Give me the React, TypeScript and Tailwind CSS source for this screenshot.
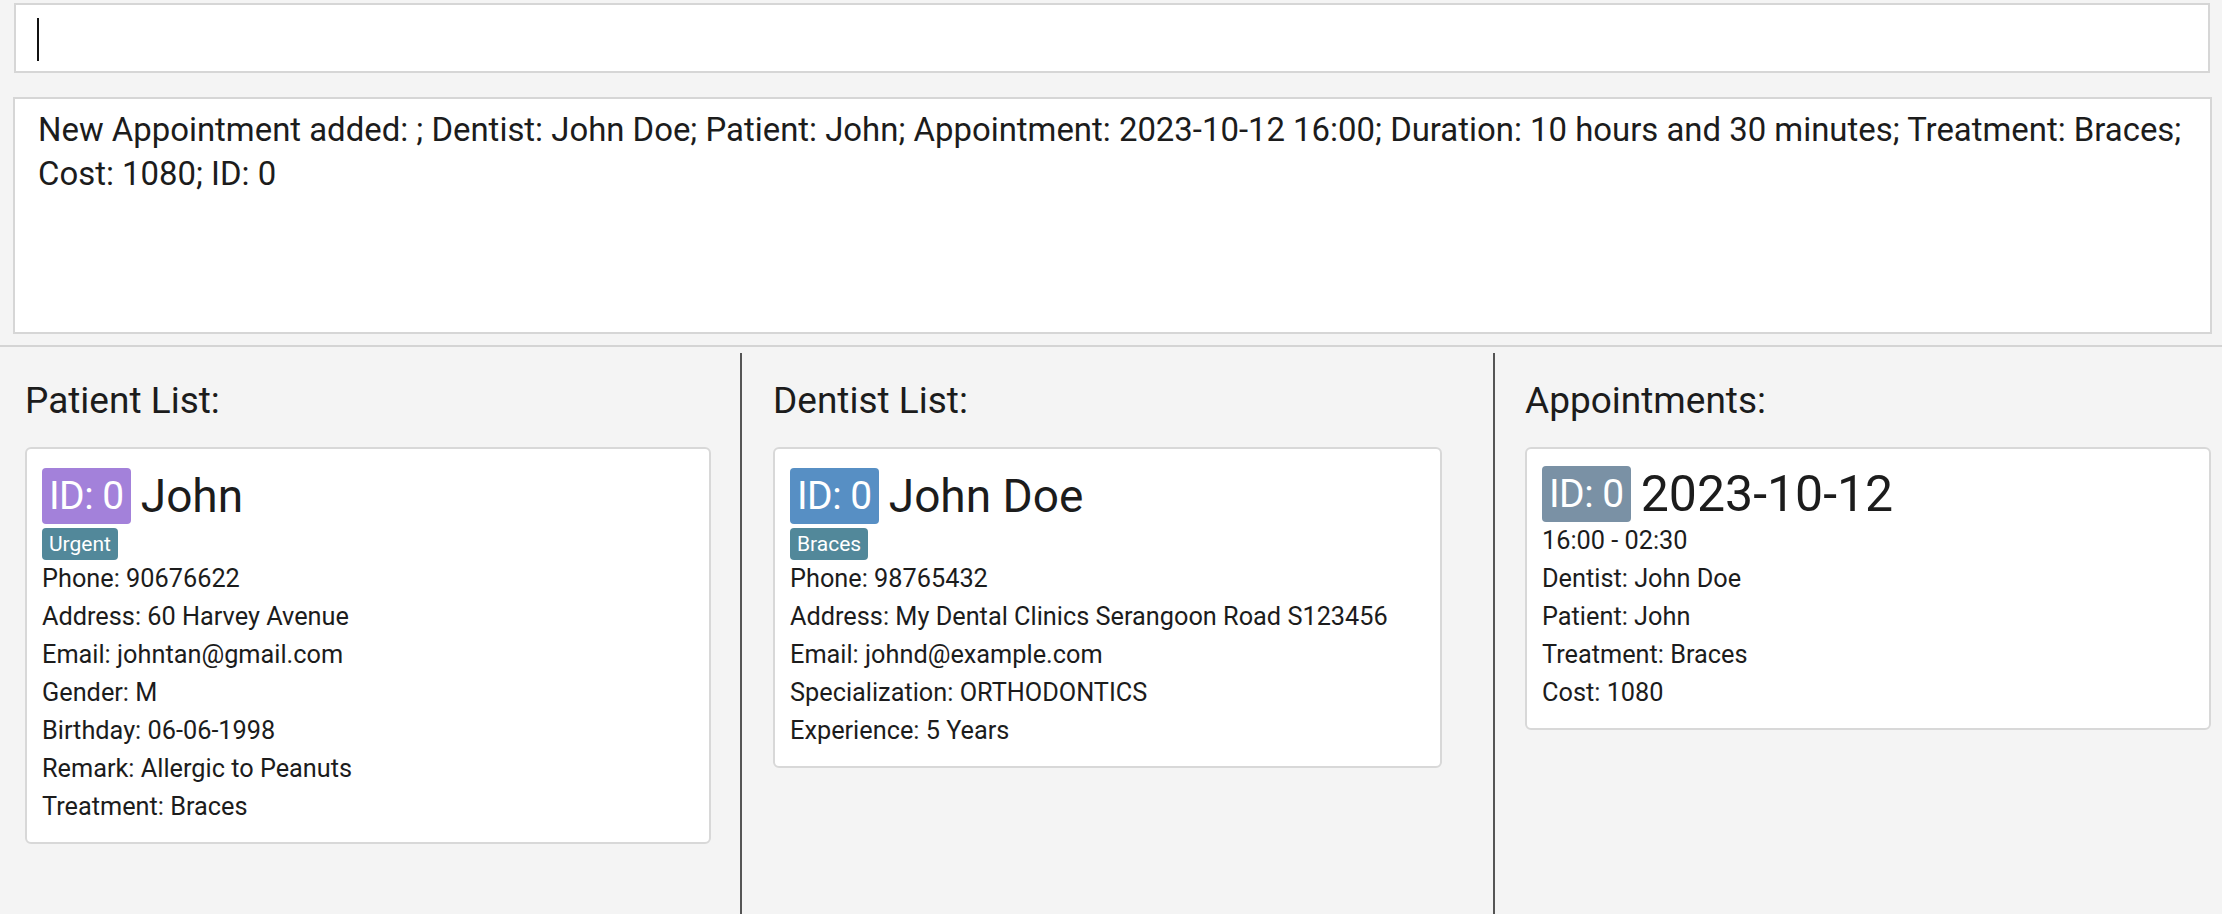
import React from "react";

function Badge({ color }: { color: string }) {
  return (
    <div className={`${color} h-[56px] rounded-[4px] px-[7px] text-white text-[39px] leading-[56px] tracking-[-0.5px]`}>
      ID: 0
    </div>
  );
}

function Line({ children }: { children: React.ReactNode }) {
  return <div className="text-[25.3px] leading-[38px] whitespace-nowrap">{children}</div>;
}

function Tag({ children }: { children: React.ReactNode }) {
  return (
    <div className="mt-[4px] self-start h-[32px] rounded-[4px] bg-[#52889a] px-[7px] text-white text-[21px] leading-[32px]">
      {children}
    </div>
  );
}

function Title({ children }: { children: React.ReactNode }) {
  return <div className="text-[37px] leading-[44px] whitespace-nowrap">{children}</div>;
}

function Card({ children, top }: { children: React.ReactNode; top: string }) {
  return (
    <div className={`mt-[24px] bg-white border-2 border-[#d8d8d8] rounded-[6px] ${top} px-[15px] pb-[16px] flex flex-col`}>
      {children}
    </div>
  );
}

export default function App() {
  return (
    <div className="w-[2222px] h-[914px] bg-[#f4f4f4] font-[Roboto,sans-serif] text-[#1c1c1c] flex flex-col overflow-hidden">
      {/* command box */}
      <div className="pt-[3px] pl-[14px] pr-[12px]">
        <div className="h-[70px] bg-white border-2 border-[#d6d6d6] pl-[21px] pt-[13px]">
          <div className="w-[2px] h-[43px] bg-[#111]" />
        </div>
      </div>

      {/* result box */}
      <div className="mt-[24px] pl-[13px] pr-[10px]">
        <div className="h-[237px] bg-white border-2 border-[#d6d6d6] pl-[23px] pt-[9px] text-[32.9px] leading-[44px]">
          <div className="whitespace-nowrap">
            New Appointment added: ; Dentist: John Doe; Patient: John; Appointment: 2023-10-12 16:00; Duration: 10 hours and 30 minutes; Treatment: Braces;
          </div>
          <div className="whitespace-nowrap">Cost: 1080; ID: 0</div>
        </div>
      </div>

      {/* separator */}
      <div className="mt-[11px] h-[2px] bg-[#d4d4d4]" />

      {/* lists */}
      <div className="flex-1 flex flex-row">
        <div className="w-[740px] pl-[25px] pr-[29px] pt-[32px] flex flex-col">
          <Title>Patient List:</Title>
          <Card top="pt-[19px]">
            <div className="flex items-center gap-[10px]">
              <Badge color="bg-[#a381da]" />
              <div className="text-[46px] leading-[56px]">John</div>
            </div>
            <Tag>Urgent</Tag>
            <Line>Phone: 90676622</Line>
            <Line>Address: 60 Harvey Avenue</Line>
            <Line>Email: johntan@gmail.com</Line>
            <Line>Gender: M</Line>
            <Line>Birthday: 06-06-1998</Line>
            <Line>Remark: Allergic to Peanuts</Line>
            <Line>Treatment: Braces</Line>
          </Card>
        </div>

        <div className="mt-[6px] w-[2px] bg-[#555]" />

        <div className="w-[751px] pl-[31px] pr-[51px] pt-[32px] flex flex-col">
          <Title>Dentist List:</Title>
          <Card top="pt-[19px]">
            <div className="flex items-center gap-[10px]">
              <Badge color="bg-[#578fc4]" />
              <div className="text-[46px] leading-[56px]">John Doe</div>
            </div>
            <Tag>Braces</Tag>
            <Line>Phone: 98765432</Line>
            <Line>Address: My Dental Clinics Serangoon Road S123456</Line>
            <Line>Email: johnd@example.com</Line>
            <Line>Specialization: ORTHODONTICS</Line>
            <Line>Experience: 5 Years</Line>
          </Card>
        </div>

        <div className="mt-[6px] w-[2px] bg-[#555]" />

        <div className="flex-1 pl-[30px] pr-[11px] pt-[32px] flex flex-col">
          <Title>Appointments:</Title>
          <Card top="pt-[17px]">
            <div className="flex items-center gap-[10px]">
              <Badge color="bg-[#7a91a5]" />
              <div className="text-[50px] leading-[56px]">2023-10-12</div>
            </div>
            <Line>16:00 - 02:30</Line>
            <Line>Dentist: John Doe</Line>
            <Line>Patient: John</Line>
            <Line>Treatment: Braces</Line>
            <Line>Cost: 1080</Line>
          </Card>
        </div>
      </div>
    </div>
  );
}
